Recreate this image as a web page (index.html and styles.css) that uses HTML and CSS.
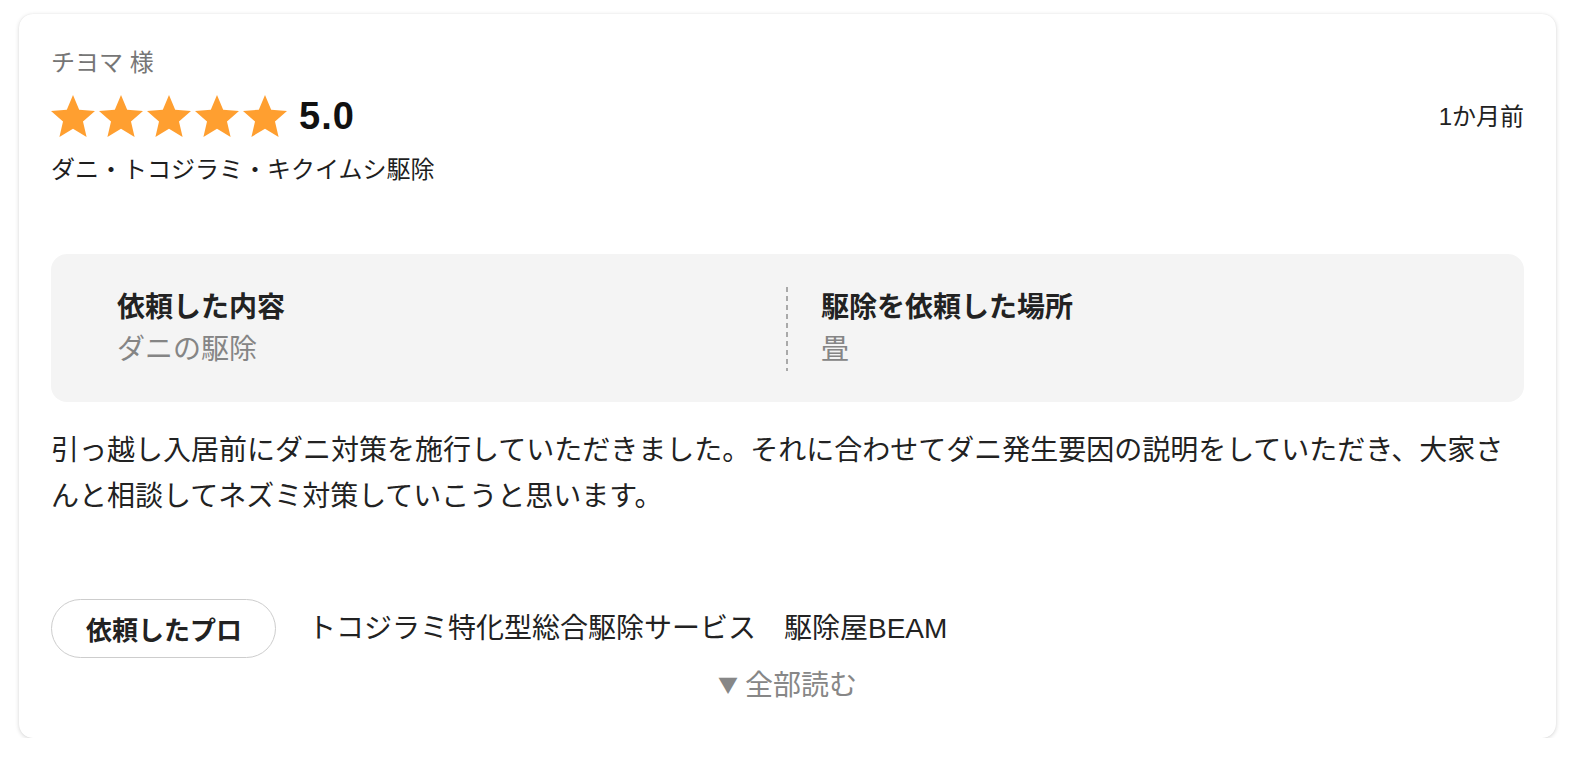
FILE: index.html
```html
<!DOCTYPE html>
<html lang="ja">
<head>
<meta charset="utf-8">
<title>レビュー</title>
<link rel="stylesheet" href="styles.css">
</head>
<body>
<div class="card">
  <div class="name">チヨマ 様</div>
  <div class="rating-row">
    <div class="stars">
      <svg class="star" viewBox="2 2 20 19"><path d="M12 17.27L18.18 21l-1.64-7.03L22 9.24l-7.19-.61L12 2 9.19 8.63 2 9.24l5.46 4.73L5.82 21z"/></svg>
      <svg class="star" viewBox="2 2 20 19"><path d="M12 17.27L18.18 21l-1.64-7.03L22 9.24l-7.19-.61L12 2 9.19 8.63 2 9.24l5.46 4.73L5.82 21z"/></svg>
      <svg class="star" viewBox="2 2 20 19"><path d="M12 17.27L18.18 21l-1.64-7.03L22 9.24l-7.19-.61L12 2 9.19 8.63 2 9.24l5.46 4.73L5.82 21z"/></svg>
      <svg class="star" viewBox="2 2 20 19"><path d="M12 17.27L18.18 21l-1.64-7.03L22 9.24l-7.19-.61L12 2 9.19 8.63 2 9.24l5.46 4.73L5.82 21z"/></svg>
      <svg class="star" viewBox="2 2 20 19"><path d="M12 17.27L18.18 21l-1.64-7.03L22 9.24l-7.19-.61L12 2 9.19 8.63 2 9.24l5.46 4.73L5.82 21z"/></svg>
    </div>
    <span class="score">5.0</span>
    <span class="date">1か月前</span>
  </div>
  <div class="category">ダニ・トコジラミ・キクイムシ駆除</div>

  <div class="details">
    <div class="detail">
      <div class="detail-title">依頼した内容</div>
      <div class="detail-value">ダニの駆除</div>
    </div>
    <div class="detail detail-second">
      <div class="detail-title">駆除を依頼した場所</div>
      <div class="detail-value">畳</div>
    </div>
  </div>

  <p class="comment">引っ越し入居前にダニ対策を施行していただきました。それに合わせてダニ発生要因の説明をしていただき、大家さんと相談してネズミ対策していこうと思います。</p>

  <div class="pro-row">
    <span class="pro-label">依頼したプロ</span>
    <span class="pro-name">トコジラミ特化型総合駆除サービス　駆除屋BEAM</span>
  </div>
  <div class="read-more"><span class="tri">▼</span>全部読む</div>
</div>
</body>
</html>
```

FILE: styles.css
```css
html, body {
  margin: 0;
  padding: 0;
  background: #ffffff;
}

body {
  font-family: "Liberation Sans", "Noto Sans CJK JP", sans-serif;
  color: #222222;
}

.card {
  box-sizing: border-box;
  width: 1537px;
  margin: 14px 0 0 19px;
  padding: 34px 32px 28px 32px;
  background: #ffffff;
  border-radius: 14px;
  box-shadow: 0 1px 4px rgba(0, 0, 0, 0.16), 0 0 1px rgba(0, 0, 0, 0.08);
}

.name {
  font-size: 24px;
  line-height: 30px;
  color: #767676;
}

.rating-row {
  display: flex;
  align-items: center;
  height: 46px;
  margin-top: 15px;
}

.stars {
  display: flex;
  gap: 4px;
}

.star {
  width: 44px;
  height: 42px;
  fill: #ff9f30;
  display: block;
}

.score {
  margin-left: 12px;
  font-size: 38px;
  letter-spacing: 1px;
  font-weight: 700;
  color: #111111;
  line-height: 46px;
}

.date {
  margin-left: auto;
  font-size: 24px;
  line-height: 46px;
  color: #222222;
  position: relative;
  top: 1px;
}

.category {
  margin-top: 13px;
  font-size: 24px;
  line-height: 36px;
  color: #1e1e1e;
}

.details {
  margin-top: 66px;
  background: #f4f4f4;
  border-radius: 16px;
  padding: 33px 32px 31px 32px;
  display: grid;
  grid-template-columns: 703px 1fr;
}

.detail {
  padding-left: 34px;
  font-size: 28px;
  line-height: 42px;
}

.detail-second {
  padding-left: 35px;
  background-image: repeating-linear-gradient(to bottom, #a9a9a9 0 5px, transparent 5px 9px);
  background-size: 2px 100%;
  background-repeat: no-repeat;
  background-position: left top;
}

.detail-title {
  font-weight: 700;
  color: #222222;
}

.detail-value {
  color: #858585;
}

.comment {
  margin: 26px 0 0 0;
  font-size: 28px;
  line-height: 46px;
  color: #222222;
}

.pro-row {
  margin-top: 79px;
  display: flex;
  align-items: center;
}

.pro-label {
  box-sizing: border-box;
  height: 59px;
  display: inline-flex;
  align-items: center;
  padding: 0 33px 0 34px;
  border: 1.5px solid #cdcdcd;
  border-radius: 30px;
  font-size: 26px;
  font-weight: 700;
  color: #222222;
}

.pro-name {
  margin-left: 32px;
  font-size: 28px;
  line-height: 46px;
  color: #222222;
}

.read-more {
  margin-top: 5px;
  text-align: center;
  font-size: 28px;
  line-height: 46px;
  color: #878787;
}

.tri {
  font-family: "Noto Sans CJK JP", sans-serif;
  font-size: 20px;
  margin-right: 7px;
  position: relative;
  top: -2px;
}
```
